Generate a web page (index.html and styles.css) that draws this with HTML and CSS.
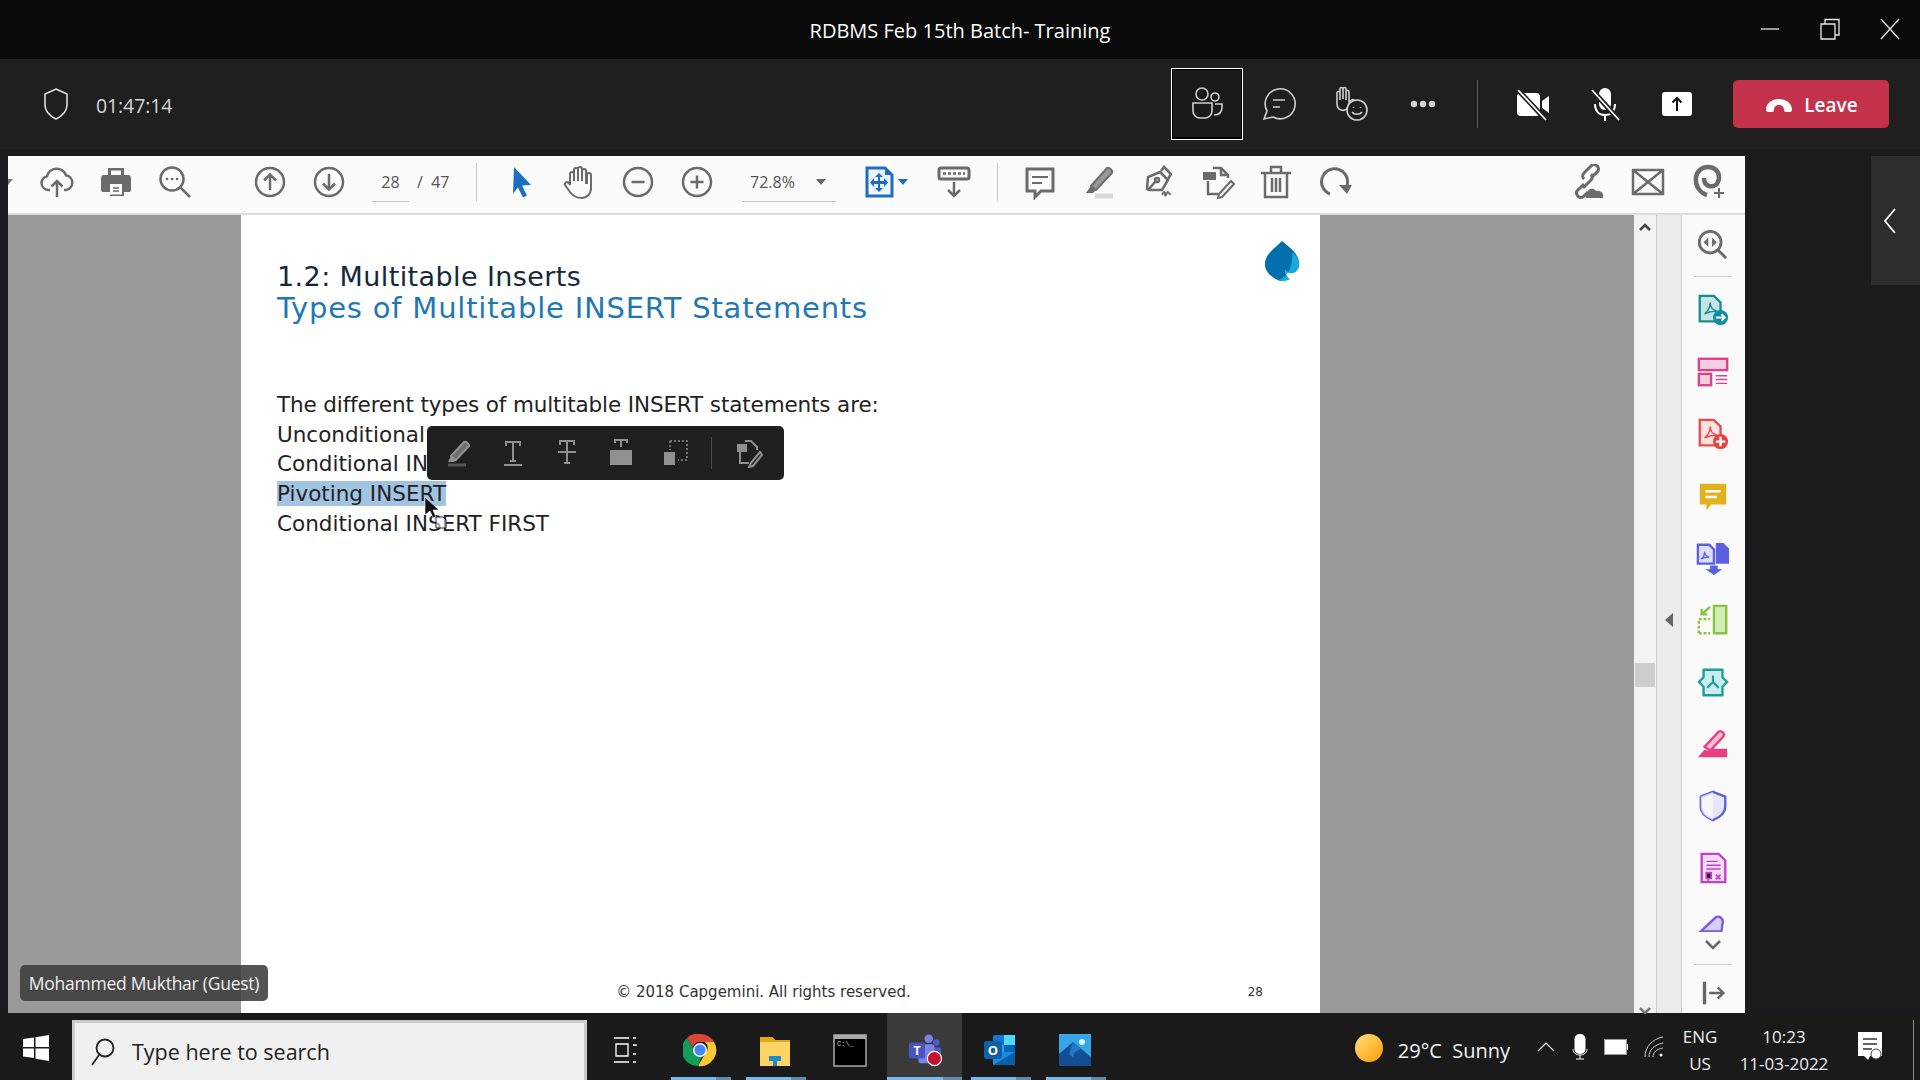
FILE: index.html
```html
<!DOCTYPE html>
<html lang="en">
<head>
<meta charset="utf-8">
<title>RDBMS Feb 15th Batch- Training</title>
<link rel="stylesheet" href="styles.css">
</head>
<body>
<div class="app">
  <header class="titlebar">
    <span></span>
    <h1 class="title">RDBMS Feb 15th Batch- Training</h1>
    <div class="winctl">
      <svg class="wc" viewBox="0 0 24 24"><path d="M3 12h18"/></svg>
      <svg class="wc" viewBox="0 0 24 24"><path d="M3 7h14v15H3z"/><path d="M7 7V2.500h14V18h-4"/></svg>
      <svg class="wc" viewBox="0 0 24 24"><path d="M3 2l18 20M21 2L3 22"/></svg>
    </div>
  </header>

  <section class="meetbar">
    <svg class="shield" viewBox="0 0 28 34"><path d="M14 2l11 5v11c0 7-5 11-11 14C8 29 3 25 3 18V7z"/></svg>
    <span class="timer">01:47:14</span>
    <div class="mtools">
      <button class="mbtn mbtn-active"><svg class="mi" viewBox="0 0 40 40"><circle cx="15" cy="10" r="6"/><circle cx="28" cy="13" r="4"/><path d="M6 19h19v8a7 7 0 0 1-7 7h-5a7 7 0 0 1-7-7z"/><path d="M28 20h7v3c0 5-3 8-8 8"/></svg></button>
      <button class="mbtn"><svg class="mi" viewBox="0 0 40 40"><path d="M5 35l3-8A15 15 0 1 1 14 33z"/><path d="M14 16h12M14 23h7"/></svg></button>
      <button class="mbtn"><svg class="mi" viewBox="0 0 40 40"><path d="M6 20V9a1.500 1.500 0 0 1 3 0v7V5a1.500 1.500 0 0 1 3 0v10V5a1.500 1.500 0 0 1 3 0v11V8a1.500 1.500 0 0 1 3 0v10c2-2 4-3 5-2l-6 8c-2 2-4 3-7 2-3-1-4-3-4-6z"/><circle class="mi-cover" cx="26" cy="26" r="10"/><path d="M21 28c2 3 8 3 10 0M22.500 23v.8M29.500 23v.8"/></svg></button>
      <button class="mbtn"><svg class="mi-fill" viewBox="0 0 40 40"><circle cx="11" cy="20" r="3.200"/><circle cx="20" cy="20" r="3.200"/><circle cx="29" cy="20" r="3.200"/></svg></button>
      <span class="msep"></span>
      <button class="mbtn"><svg class="mw" viewBox="0 0 40 40"><rect x="4" y="9" width="23" height="23" rx="4" fill="#fff"/><path d="M29 17l7-5v17l-7-5z" fill="#fff"/><path d="M5 6l28 30" stroke="#1f1f1f" stroke-width="5"/><path d="M5 6l28 30" stroke="#fff" stroke-width="1.800"/></svg></button>
      <button class="mbtn"><svg class="mw" viewBox="0 0 40 40"><rect x="14" y="4" width="12" height="22" rx="6" fill="#fff"/><path d="M10 20c0 7 4 11 10 11s10-4 10-11M20 31v6" fill="none" stroke="#fff" stroke-width="2"/><path d="M7 6l27 30" stroke="#1f1f1f" stroke-width="5"/><path d="M7 6l27 30" stroke="#fff" stroke-width="1.800"/></svg></button>
      <button class="mbtn"><svg class="mw" viewBox="0 0 40 40"><rect x="5" y="8" width="30" height="24" rx="3" fill="#fff"/><path d="M20 27V14M15.500 18.500L20 14l4.500 4.500" fill="none" stroke="#111" stroke-width="2"/></svg></button>
      <button class="leave"><svg class="hang" viewBox="0 0 30 20"><path d="M2 15c0-7 6-11 13-11s13 4 13 11c0 1-1 2-2 2h-4c-1 0-2-1-2-2 0-3-2-5-5-5s-5 2-5 5c0 1-1 2-2 2H4c-1 0-2-1-2-2z" fill="#fff"/></svg><span>Leave</span></button>
    </div>
  </section>

  <main class="stage">
    <div class="acrobat">
      <nav class="tbar">
        <i class="edgecaret"></i>
        <div class="tgroup g-first">
          <svg class="ti" viewBox="0 0 36 36"><path d="M11 26H9a7 7 0 0 1-1-13.800 10 10 0 0 1 19-1A7.500 7.500 0 0 1 27 26h-2"/><path d="M18 33V17M12.500 22.500L18 17l5.500 5.500"/></svg>
          <svg class="ti" viewBox="0 0 36 36"><path class="solid" d="M10 4h16v7h4a3 3 0 0 1 3 3v12a2 2 0 0 1-2 2h-5v4H12v-4H5a2 2 0 0 1-2-2V14a3 3 0 0 1 3-3h4z"/><path class="paper" d="M13 6.500h10V11H13zM12 20h12v10.500H12z"/><path d="M15 24h6M15 27h6" stroke-width="1.500"/></svg>
          <svg class="ti" viewBox="0 0 36 36"><circle cx="15" cy="15" r="11.500"/><path d="M23.500 23.500L33 33"/><path class="dots" d="M10 15h.1M15 15h.1M20 15h.1"/></svg>
        </div>
        <div class="tgroup g-nav">
          <svg class="ti" viewBox="0 0 36 36"><circle cx="18" cy="18" r="14"/><path d="M18 26V11M12 16.500L18 10.500l6 6"/></svg>
          <svg class="ti" viewBox="0 0 36 36"><circle cx="18" cy="18" r="14"/><path d="M18 10v15M12 19.500l6 6 6-6"/></svg>
        </div>
        <div class="pager"><span class="pagein">28</span><span class="pagetotal">/&nbsp;&nbsp;47</span></div>
        <span class="tsep"></span>
        <div class="tgroup g-tools">
          <svg class="ti" viewBox="0 0 36 36"><path d="M12 3l17 18-9 .5 5 10-4 2-5-10-5 6z" class="blue"/></svg>
          <svg class="ti" viewBox="0 0 36 36"><path d="M9 21V10a2 2 0 0 1 4 0v7V6a2 2 0 0 1 4 0v11V5a2 2 0 0 1 4 0v12V7a2 2 0 0 1 4 0v12h1V11a2 2 0 0 1 4 0v13c0 6-4 10-9.500 10S12 32 9 28l-5-7c-1-2 2-4 4-2z" stroke-width="2"/></svg>
          <svg class="ti" viewBox="0 0 36 36"><circle cx="18" cy="18" r="14"/><path d="M11.500 18h13"/></svg>
          <svg class="ti" viewBox="0 0 36 36"><circle cx="18" cy="18" r="14"/><path d="M11.500 18h13M18 11.500v13"/></svg>
        </div>
        <div class="zoombox"><span>72.8%</span><i class="caret"></i></div>
        <div class="fitbox">
          <svg class="ti" viewBox="0 0 36 36"><path class="bluefill" d="M6 4h18l7 7v21H6z"/><path class="bluemark" d="M24 4v7h7zM18 9l4 4h-3v4h4v-3l4 4.500-4 4.500v-3h-4v4h3l-4 4-4-4h3v-4h-4v3l-4-4.500 4-4.500v3h4v-4h-3z"/></svg>
          <i class="caret caret-blue"></i>
        </div>
        <svg class="ti ti-read" viewBox="0 0 36 36"><rect class="thick" x="3" y="4" width="30" height="11" rx="2"/><path class="readdots" d="M7 9.500h22"/><path d="M18 18v14M12 26l6 6 6-6"/></svg>
        <span class="tsep tsep-b"></span>
        <div class="tgroup g-comment">
          <svg class="ti" viewBox="0 0 36 36"><path class="thick" d="M5 5h26v22H19l-6 6v-6H5z"/><path d="M10 13h16M10 19h10" stroke-width="2"/></svg>
          <svg class="ti" viewBox="0 0 36 36"><path class="tint" d="M10 22L26 4c2-1 6 2 5 5L15 26z"/><path class="solid" d="M10 22l5 4-3 3H5z"/><path d="M14 32h18" stroke="#d9d9d9" stroke-width="5"/></svg>
          <svg class="ti" viewBox="0 0 36 36"><path d="M20 8l8 8-6 10H9l-2-1 1-12z"/><path d="M21 7l3-4 7 7-3 5M8 26l8-9"/><circle cx="17" cy="16" r="2"/><path d="M22 31c2-4 3-4 3-1s1 2 2-1 2 2 4 1" stroke-width="1.800"/></svg>
          <svg class="ti" viewBox="0 0 36 36"><path d="M14 4h8l7 7v3M9 17v13h10"/><path d="M22 4v7h7"/><rect class="solid" x="4" y="8" width="13" height="8"/><path d="M20 30l12-13 3 3-12 13-4 1z" stroke-width="2"/></svg>
          <svg class="ti" viewBox="0 0 36 36"><path d="M3 9h30M13 8V3h10v5M7 9v24h22V9M14 14v14M18 14v14M22 14v14"/></svg>
          <svg class="ti" viewBox="0 0 36 36"><path class="thick" d="M13 30A13 13 0 1 1 29 24"/><path class="solid" d="M22 21h13l-5 9z"/></svg>
        </div>
        <div class="tgroup g-share">
          <svg class="ti" viewBox="0 0 36 36"><path class="thick" d="M14 20l-7 7a4.500 4.500 0 0 0 6 6l5-5M21 14l7-7a4.500 4.500 0 0 0-6-6l-8 8a4 4 0 0 0 0 6M21 10a4 4 0 0 1 0 6l-8 8"/><path class="solid" d="M17 34c-2 0-2-3 0-4 0-5 6-7 9-3 3-1 7 1 7 4v3z"/></svg>
          <svg class="ti" viewBox="0 0 36 36"><path d="M3 6h30v24H3zM3 6l30 24M33 6L3 30"/></svg>
          <svg class="ti" viewBox="0 0 36 36"><path class="heavy" d="M17 31C10 29 5 22 6 13c1-6 6-10 12-10s11 4 11 10c0 3 0 4-2 7-2 2-4 3-8 2-3-1-5-4-5-8"/><path d="M29 24v10M24 29h10" stroke-width="2"/></svg>
        </div>
      </nav>

      <div class="doc">
        <div class="gutter gutter-l"></div>
        <article class="page">
          <div class="slidehead">
            <div class="heads">
              <h2 class="h-main">1.2: Multitable Inserts</h2>
              <h3 class="h-sub">Types of Multitable INSERT Statements</h3>
            </div>
            <svg class="logo" viewBox="0 0 40 46"><path d="M20 1C28 8 38 14 38 25c0 7-6 11-11 9-2-1-3-2-4-3 0 4 2 8 5 10-6 3-12 2-16-1-5-3-10-8-10-15C2 15 12 9 20 1z" fill="#0070ad"/><path d="M31 13c4 3 7 7 7 12 0 7-6 11-11 9-2-1-3-2-4-3 0 4 2 8 5 10-5 3-9 2-12 1 8-3 15-9 15-29z" fill="#12abdb"/></svg>
          </div>
          <ul class="lines">
            <li class="lead">The different types of multitable INSERT statements are:</li>
            <li>Unconditional INSERT ALL</li>
            <li>Conditional INSERT ALL</li>
            <li><mark class="sel">Pivoting INSERT</mark></li>
            <li>Conditional INSERT FIRST</li>
          </ul>
          <footer class="slidefoot"><span class="copy">© 2018 Capgemini. All rights reserved.</span><span class="pno">28</span></footer>

          <div class="popup">
            <svg class="pi" viewBox="0 0 30 30"><path class="pt" d="M7 18L20 4c2-1 5 2 5 4L12 22z"/><path class="pf" d="M7 18l5 4-2 2H4z"/><path d="M4 27h18" stroke="#555" stroke-width="3"/></svg>
            <svg class="pi" viewBox="0 0 30 30"><path d="M8 8V4h14v4M15 4v19M12 23h6M6 27h18"/></svg>
            <svg class="pi" viewBox="0 0 30 30"><path d="M8 7V3h14v4M15 3v22M12 25h6M6 14h18"/></svg>
            <svg class="pi" viewBox="0 0 30 30"><path d="M9 5V2h12v3M15 2v7"/><path class="pf" d="M4 12h22v15H4z"/></svg>
            <svg class="pi" viewBox="0 0 30 30"><path class="pf" d="M4 14h11v13H4z"/><path d="M10 3h17v19H18" stroke-dasharray="2 2" stroke-width="1.500"/><path d="M10 3v9" stroke-dasharray="2 2" stroke-width="1.500"/></svg>
            <span class="psep"></span>
            <svg class="pi" viewBox="0 0 30 30"><path d="M12 3h6l6 6v3M7 14v11h9"/><rect class="pf" x="4" y="6" width="10" height="8"/><path d="M18 25l9-11 2 3-9 11-4 1z"/></svg>
          </div>
          <svg class="cursor" viewBox="0 0 30 36"><path d="M1 1v18l5-4 3 7 3-1-3-7h6z" fill="#111" stroke="#fff" stroke-width=".6"/><path d="M12 21h7l3 3v8h-10z" fill="#fff" fill-opacity=".6" stroke="#222"/></svg>
        </article>
        <div class="gutter gutter-r"></div>
        <div class="scroll">
          <svg class="sarrow" viewBox="0 0 14 10"><path d="M2 8l5-5 5 5"/></svg>
          <span class="thumb"></span>
          <svg class="sarrow sarrow-b" viewBox="0 0 14 10"><path d="M2 2l5 5 5-5"/></svg>
        </div>
        <div class="strip"><i class="stripcaret"></i></div>
        <aside class="tools">
          <svg class="si si-first" viewBox="0 0 36 36"><circle cx="15" cy="15" r="11.500" fill="none" stroke="#6b6b6b" stroke-width="3"/><path d="M23.500 23.500L32 32" stroke="#6b6b6b" stroke-width="3"/><path d="M13 10v10l-5-5zM17 10v10l5-5z" fill="#6b6b6b"/></svg>
          <span class="ssep"></span>
          <svg class="si" viewBox="0 0 36 36"><path d="M4 3h15l7 7v20H4z" fill="#c5e4e6" stroke="#1a8a94" stroke-width="2.500"/><path d="M9 22c4-2 6-8 6-12 0 5 3 8 7 9-5 0-9 1-13 3z" fill="none" stroke="#1a8a94" stroke-width="1.500"/><circle cx="26" cy="26" r="8" fill="#0e8ea5"/><path d="M21 26h9M27 22.500l3.500 3.500-3.500 3.500" fill="none" stroke="#fff" stroke-width="2"/></svg>
          <svg class="si" viewBox="0 0 36 36"><rect x="3" y="4" width="30" height="12" fill="#f8cfe0" stroke="#e0408a" stroke-width="2.500"/><rect x="3" y="20" width="13" height="12" fill="#f8cfe0" stroke="#e0408a" stroke-width="2.500"/><path d="M21 22h12M21 26h12M21 30h12" stroke="#e0408a" stroke-width="1.500"/></svg>
          <svg class="si" viewBox="0 0 36 36"><path d="M4 3h15l7 7v20H4z" fill="#fde0e0" stroke="#e04f4f" stroke-width="2.500"/><path d="M9 22c4-2 6-8 6-12 0 5 3 8 7 9-5 0-9 1-13 3z" fill="none" stroke="#e04f4f" stroke-width="1.500"/><circle cx="26" cy="26" r="8" fill="#e8413f"/><path d="M21 26h10M26 21v10" stroke="#fff" stroke-width="2.500"/></svg>
          <svg class="si" viewBox="0 0 36 36"><path d="M5 5h26a1 1 0 0 1 1 1v20a1 1 0 0 1-1 1H16l-5 6v-6H5a1 1 0 0 1-1-1V6a1 1 0 0 1 1-1z" fill="#e3b11d"/><path d="M10 13h16M10 19h12" stroke="#fff" stroke-width="2.500"/></svg>
          <svg class="si" viewBox="0 0 36 36"><path d="M2 4h12l5 5v15H2z" fill="#dcdffb" stroke="#5b5fe0" stroke-width="2.500"/><path d="M5 19c3-1 4-5 4-8 0 3 2 5 5 6-3 0-6 0-9 2z" fill="none" stroke="#5b5fe0" stroke-width="1.300"/><path d="M21 2h8l6 6v16H21z" fill="#5b5fe0"/><path d="M15 26h8v4h5l-9 6-9-6h5z" fill="#5b5fe0"/></svg>
          <svg class="si" viewBox="0 0 36 36"><path d="M19 3h13v29H19z" fill="#d3edb8" stroke="#86c43c" stroke-width="2.500"/><path d="M3 32V17h12M3 32h12" fill="none" stroke="#86c43c" stroke-width="2.500" stroke-dasharray="3 2"/><path d="M15 4L6 12M6 6v6h6" fill="none" stroke="#86c43c" stroke-width="2.500"/></svg>
          <svg class="si" viewBox="0 0 36 36"><path d="M8 5h20v8l5 5-5 5v9H8v-9l-5-5 5-5z" fill="#c9ecec" stroke="#1a9d9d" stroke-width="2.500" stroke-linejoin="round"/><path d="M18 18v-7M18 18l-6 6M18 18l6 6" stroke="#1a9d9d" stroke-width="2.200"/></svg>
          <svg class="si" viewBox="0 0 36 36"><path d="M9 21L24 5c3-2 7 2 5 5L15 25z" fill="#f6bfd2" stroke="#e8407f" stroke-width="2.500"/><path d="M2 32l7-8 6 2 3-3h15v9z" fill="#e8407f"/></svg>
          <svg class="si" viewBox="0 0 36 36"><path d="M18 3l13 5v11c0 7-6 11-13 14C11 30 5 26 5 19V8z" fill="#e5e6fb" stroke="#5b5fe0" stroke-width="2.500"/><path d="M18 3v30C11 30 5 26 5 19V8z" fill="#fff" opacity=".6"/></svg>
          <svg class="si" viewBox="0 0 36 36"><path d="M6 3h18l7 7v23H6z" fill="#f6def6" stroke="#c23fc8" stroke-width="2.500"/><path d="M11 11h12M11 15h15M11 19h15" stroke="#c23fc8" stroke-width="1.500"/><path d="M11 23h5v6h-5zM13 29v3" stroke="#c23fc8" stroke-width="2"/><path d="M21 25l5 5M26 25l-5 5" stroke="#c23fc8" stroke-width="1.800"/></svg>
          <div class="toolsfade">
            <svg class="si si-cut" viewBox="0 0 36 20"><path d="M5 20l16-15c3-2 9 1 7 7l-1 8z" fill="#d9cdfa" stroke="#7c5be0" stroke-width="2.500"/></svg>
            <svg class="schev" viewBox="0 0 20 12"><path d="M3 2l7 7 7-7"/></svg>
          </div>
          <span class="ssep ssep-b"></span>
          <svg class="si si-collapse" viewBox="0 0 36 36"><path d="M9 6v24" stroke="#666" stroke-width="3.500"/><path d="M14 18h15M23 12l6 6-6 6" fill="none" stroke="#666" stroke-width="2.500"/></svg>
        </aside>
        <div class="nametag">Mohammed Mukthar (Guest)</div>
      </div>
    </div>
    <div class="sidehandle"><svg class="hchev" viewBox="0 0 14 28"><path d="M12 2L2 14l10 12"/></svg></div>
  </main>

  <footer class="taskbar">
    <div class="startbtn"><svg class="win" viewBox="0 0 26 26"><path d="M0 4l11-1.500V12H0zM12.500 2.300L26 0v12H12.500zM0 13.500h11V23L0 21.500zM12.500 13.500H26V26l-13.500-2.200z" fill="#fff"/></svg></div>
    <div class="searchbox">
      <svg class="searchicon" viewBox="0 0 26 30"><circle cx="15" cy="11" r="8.500"/><path d="M9 18L2 28"/></svg>
      <span>Type here to search</span>
    </div>
    <div class="task">
      <svg class="tk-view" viewBox="0 0 24 28"><path d="M1 2h15M1 26h15M3 8h12v12H3zM20 2h3M20 9h3v1M20 18h3M20 26h3" fill="none" stroke="#fff" stroke-width="1.300"/></svg>
    </div>
    <div class="task task-on">
      <svg class="tk" viewBox="0 0 34 34"><path d="M17 1a16 16 0 0 1 14 8H17a8 8 0 0 0-7.500 5L4 5a16 16 0 0 1 13-4z" fill="#db4437"/><path d="M4 5l7 12a7 7 0 0 0 8 6l-4 10A16 16 0 0 1 4 5z" fill="#0f9d58"/><path d="M31 9a16 16 0 0 1-16 24l7-12a8 8 0 0 0 0-12z" fill="#fcc934"/><circle cx="17" cy="17" r="7" fill="#fff"/><circle cx="17" cy="17" r="5.500" fill="#4285f4"/></svg>
    </div>
    <div class="task task-on">
      <svg class="tk" viewBox="0 0 34 34"><path d="M2 4h12l3 3h15v26H2z" fill="#fcd462"/><path d="M2 4h12l3 3H2z" fill="#e8a317"/><path d="M2 9h30V7H2z" fill="#e8a317"/><path d="M11 23h12v5h-4v5h-4v-5h-4z" fill="#1f8ad2"/></svg>
    </div>
    <div class="task">
      <svg class="tk" viewBox="0 0 34 34"><rect x="1" y="2" width="32" height="31" fill="#000" stroke="#aaa" stroke-width="1.500"/><rect x="1" y="2" width="32" height="4" fill="#aaa"/><text x="4" y="13" class="cmdtext">C:\_</text></svg>
    </div>
    <div class="task task-on task-active">
      <svg class="tk" viewBox="0 0 36 36"><circle cx="22" cy="6" r="4.500" fill="#7b83eb"/><circle cx="30" cy="10" r="3.500" fill="#5059c9"/><rect x="24" y="15" width="11" height="14" rx="2" fill="#5059c9"/><rect x="11" y="12" width="17" height="20" rx="3" fill="#7b83eb"/><rect x="1" y="10" width="17" height="17" rx="2" fill="#4b53bc"/><text x="9.500" y="23" class="tktext">T</text><circle cx="28" cy="27" r="7.500" fill="#c4122f" stroke="#fff" stroke-width="1.200"/></svg>
    </div>
    <div class="task task-on">
      <svg class="tk" viewBox="0 0 34 34"><rect x="10" y="2" width="22" height="30" rx="2" fill="#0f78d4"/><path d="M21 2h11v10H21z" fill="#50d9ff"/><path d="M10 12h11v10H10z" fill="#28a8ea"/><path d="M21 12h11v10H21z" fill="#0364b8"/><path d="M10 19l22 0v13H10z" fill="#1490df"/><path d="M10 32l22-13v13z" fill="#0a5da8"/><rect x="1" y="8" width="18" height="18" rx="2" fill="#0f5ea8"/><text x="10" y="22" class="tktext">O</text></svg>
    </div>
    <div class="task task-on">
      <svg class="tk" viewBox="0 0 34 34"><rect x="1" y="1" width="32" height="32" fill="#35a7e8"/><path d="M1 33V21l14-12 18 15v9z" fill="#134f93"/><path d="M15 9l8 7-6 3-2 5-4-3z" fill="#2178c4"/><circle cx="24" cy="9" r="3" fill="#dff3ff"/></svg>
    </div>

    <div class="tray">
      <svg class="sun" viewBox="0 0 28 30"><defs><linearGradient id="sung" x1="0" y1="0" x2="1" y2="1"><stop offset="0" stop-color="#fbe27e"/><stop offset="1" stop-color="#ff9a00"/></linearGradient></defs><ellipse cx="14" cy="15" rx="14" ry="14" fill="url(#sung)"/></svg>
      <span class="weather">29°C&nbsp; Sunny</span>
      <svg class="ty ty-chev" viewBox="0 0 20 20"><path d="M2 14l8-8 8 8" fill="none" stroke="#fff" stroke-width="1.200"/></svg>
      <svg class="ty ty-mic" viewBox="0 0 16 26"><rect x="2.500" y="0" width="11" height="20" rx="5" fill="#fff"/><path d="M1 15c0 4 3 6 7 6s7-2 7-6M8 21v4M4 25h8" fill="none" stroke="#fff" stroke-width="1"/></svg>
      <svg class="ty ty-bat" viewBox="0 0 24 18"><rect x="1" y="2" width="21" height="14" fill="#fff" stroke="#fff"/><rect x="22" y="6" width="2" height="6" fill="#fff"/><rect x=".5" y="1.500" width="22" height="15" fill="none" stroke="#999"/></svg>
      <svg class="ty ty-wifi" viewBox="0 0 20 22"><path d="M1 21C1 11 8 3 19 1M5 21c0-7 5-12 14-14M9 21c0-4 3-8 10-9" fill="none" stroke="#ccc" stroke-width="1"/><circle cx="17" cy="19" r="1.500" fill="#fff"/></svg>
      <div class="lang"><span>ENG</span><span>US</span></div>
      <div class="clock"><span>10:23</span><span>11-03-2022</span></div>
      <svg class="notif" viewBox="0 0 28 32"><path d="M2 1h24v24H14l-2 4-4-4H2z" fill="#fff"/><path d="M7 8h14M7 13h14M7 18h9" stroke="#333" stroke-width="1.400"/><circle cx="20" cy="23" r="5" fill="#fff" stroke="#444"/></svg>
      <span class="showdesk"></span>
    </div>
  </footer>
</div>
</body>
</html>
```

FILE: styles.css
```css
* { box-sizing: border-box; }
html, body { margin: 0; padding: 0; background: #1b1b1d; }
.app { width: 1920px; height: 1080px; display: flex; flex-direction: column; overflow: hidden; font-family: "Open Sans", "Noto Sans", sans-serif; color: #fff; }

/* title bar */
.titlebar { height: 58px; background: #0a0a0a; display: grid; grid-template-columns: 1fr auto 1fr; align-items: center; flex: none; padding-top: 2px; }
.title { margin: 0; font-size: 20px; font-weight: 400; color: #fff; }
.winctl { display: flex; justify-content: flex-end; gap: 36px; padding-right: 18px; padding-bottom: 2px; }
.wc { width: 24px; height: 24px; fill: none; stroke: #e8e8e8; stroke-width: 1.300; }

/* meeting bar */
.meetbar { height: 91px; flex: none; background: #1f1f1f; border-top: 1px solid #000; display: flex; align-items: center; padding-left: 42px; padding-right: 31px; }
.shield { width: 28px; height: 34px; fill: none; stroke: #e6e6e6; stroke-width: 1.500; flex: none; }
.timer { font-size: 19.500px; color: #d6d6d6; margin-left: 26px; padding-top: 2px; letter-spacing: -.1px; }
.mtools { margin-left: auto; display: flex; align-items: center; }
.mbtn { width: 72px; height: 72px; background: none; border: 0; padding: 0; display: flex; align-items: center; justify-content: center; flex: none; }
.mbtn-active { border: 1px solid #fff; background: #1a1a1a; box-shadow: inset 0 -2px 0 #000, inset 0 0 0 1px #000; }
.mi { width: 40px; height: 40px; fill: none; stroke: #cfcfcf; stroke-width: 1.600; }
.mi .mi-cover { fill: #1f1f1f; }
.mi-fill { width: 40px; height: 40px; fill: #d2d2d2; }
.mw { width: 40px; height: 40px; }
.msep { width: 1px; height: 48px; background: #5a5a5a; margin: 0 19px 0 18px; flex: none; }
.leave { width: 156px; height: 48px; margin-left: 20px; background: #c4314b; border: 0; border-radius: 5px; color: #fff; display: flex; align-items: center; justify-content: center; gap: 10px; font: 600 19px "Open Sans", sans-serif; flex: none; padding-top: 2px; }
.hang { width: 30px; height: 20px; }

/* stage */
.stage { flex: 1; display: flex; padding-top: 7px; background: #1b1b1d; min-height: 0; }
.acrobat { margin-left: 8px; width: 1737px; display: flex; flex-direction: column; background: #fafafa; color: #333; }
.sidehandle { margin-left: 126px; width: 49px; height: 129px; background: #2d2d2d; display: flex; align-items: center; justify-content: center; padding-right: 12px; }
.hchev { width: 14px; height: 28px; fill: none; stroke: #fff; stroke-width: 1.800; }

/* acrobat toolbar */
.tbar { height: 59px; flex: none; background: #fbfbfb; border-bottom: 2px solid #dcdcdc; display: flex; align-items: center; position: relative; color: #666; padding-bottom: 5px; }
.edgecaret { width: 5px; height: 6px; background: #777; clip-path: polygon(0 0, 100% 0, 0 100%); flex: none; }
.tgroup { display: flex; gap: 23px; align-items: center; }
.g-first { margin-left: 26px; }
.g-nav { margin-left: 59px; }
.ti { width: 36px; height: 36px; fill: none; stroke: #6b6b6b; stroke-width: 2.500; flex: none; }
.ti .solid { fill: #6b6b6b; stroke: none; }
.ti .paper { fill: #fbfbfb; stroke: none; }
.ti .blue { fill: #1b6ec2; stroke: none; }
.ti .thick { stroke-width: 3; }
.ti .heavy { stroke-width: 4.500; }
.ti .tint { fill: #9a9a9a; stroke-width: 2; }
.ti .dots { stroke-width: 2.600; stroke-linecap: round; }
.ti .readdots { stroke-width: 2.500; stroke-dasharray: 3 2; }
.ti .bluefill { fill: #eef5fc; stroke: #1b6ec2; stroke-width: 3; }
.ti .bluemark { fill: #1b6ec2; stroke: none; }
.pager { margin-left: 25px; width: 104px; height: 40px; display: flex; align-items: center; font: 16px "Open Sans", sans-serif; color: #555; position: relative; }
.pagein { width: 37px; text-align: center; height: 40px; line-height: 40px; border-bottom: 1px solid #c8c8c8; }
.pagetotal { margin-left: 8px; }
.tsep { width: 1px; height: 38px; background: #c8c8c8; flex: none; }
.g-tools { margin-left: 25px; }
.zoombox { margin-left: 27px; width: 94px; height: 40px; border-bottom: 1px solid #c8c8c8; display: flex; align-items: center; justify-content: space-between; padding: 0 10px 0 8px; font: 16px "Open Sans", sans-serif; color: #555; flex: none; }
.caret { width: 0; height: 0; border-left: 5px solid transparent; border-right: 5px solid transparent; border-top: 6px solid #666; display: block; flex: none; }
.caret-blue { border-top-color: #1b6ec2; }
.fitbox { margin-left: 25px; display: flex; align-items: center; gap: 1px; flex: none; }
.ti-read { margin-left: 28px; }
.tsep-b { margin-left: 25px; }
.g-comment { margin-left: 24px; gap: 23px; }
.g-share { margin-left: auto; margin-right: 19px; gap: 24px; }

/* document */
.doc { flex: 1; display: flex; min-height: 0; position: relative; }
.gutter { background: #9a9a9a; flex: none; }
.gutter-l { width: 233px; }
.gutter-r { width: 314px; }
.page { width: 1079px; flex: none; background: #fff; display: flex; flex-direction: column; position: relative; padding: 0 57px 0 36px; color: #222; font-family: "DejaVu Sans", Verdana, sans-serif; overflow: hidden; }
.slidehead { display: flex; justify-content: space-between; align-items: flex-start; padding-top: 46px; }
.h-main { margin: 0; font-size: 27px; line-height: 31px; font-weight: 400; color: #16283c; letter-spacing: .4px; }
.h-sub { margin: 0; font-size: 29px; line-height: 32px; font-weight: 400; color: #1f78b4; letter-spacing: .8px; }
.logo { width: 38px; height: 46px; margin-top: -22px; margin-right: -38px; flex: none; }
.lines { list-style: none; margin: 66px 0 0; padding: 0; font-size: 21.500px; line-height: 29.700px; color: #222; }
.lead { letter-spacing: -.13px; }
.sel { background: #a0c4e2; color: #222; }
.slidefoot { margin-top: auto; padding-bottom: 11px; display: flex; justify-content: flex-end; font-size: 15px; color: #333; }
.copy { margin-right: 337px; }
.pno { font-size: 12px; line-height: 19px; }
.popup { position: absolute; left: 186px; top: 211px; width: 357px; height: 54px; background: #1f1f1f; border-radius: 5px; display: flex; align-items: center; padding-left: 17px; gap: 24px; }
.pi { width: 30px; height: 30px; flex: none; fill: none; stroke: #909090; stroke-width: 2; }
.pi .pf { fill: #909090; stroke: none; }
.pi .pt { fill: #6e6e6e; }
.psep { width: 1px; height: 32px; background: #4a4a4a; margin: 0 -3px; flex: none; }
.cursor { position: absolute; left: 183px; top: 281px; width: 30px; height: 36px; }

/* scrollbar + strip */
.scroll { width: 23px; flex: none; background: #f3f3f3; border-right: 1px solid #c9c9c9; display: flex; flex-direction: column; align-items: center; position: relative; }
.sarrow { width: 14px; height: 10px; margin-top: 7px; fill: none; stroke: #444; stroke-width: 2.500; flex: none; }
.sarrow-b { margin-top: 0; position: absolute; bottom: -3px; left: 4px; stroke: #777; }
.thumb { width: 20px; height: 24px; background: #cdcdcd; margin-top: 431px; flex: none; }
.strip { width: 25px; flex: none; background: #ebebeb; border-right: 1px solid #cfcfcf; display: flex; align-items: center; justify-content: center; }
.stripcaret { width: 0; height: 0; border-top: 7px solid transparent; border-bottom: 7px solid transparent; border-right: 8px solid #666; display: block; margin-top: 12px; }

/* tool panel */
.tools { width: 63px; flex: none; background: #fafafa; display: flex; flex-direction: column; align-items: center; padding: 12px 2px 0 0; }
.si { width: 34px; height: 36px; flex: none; margin-bottom: 26px; display: block; }
.si-first { margin-bottom: 13px; }
.ssep { width: 38px; height: 1px; background: #d4d4d4; flex: none; margin-bottom: 15px; }
.ssep-b { margin-bottom: 10px; }
.toolsfade { display: flex; flex-direction: column; align-items: center; height: 52px; flex: none; }
.si-cut { height: 20px; margin-bottom: 7px; }
.schev { width: 20px; height: 12px; fill: none; stroke: #666; stroke-width: 2.500; flex: none; }
.si-collapse { margin: 0; }

.nametag { position: absolute; left: 12px; bottom: 12px; width: 248px; height: 36px; background: rgba(60,60,60,.88); border-radius: 5px; color: #f0f0f0; font: 17.500px/36px "Open Sans", sans-serif; text-align: center; letter-spacing: -.25px; white-space: nowrap; }

/* taskbar */
.taskbar { height: 67px; flex: none; background: #1a1a1a; display: flex; align-items: stretch; }
.startbtn { width: 72px; display: flex; align-items: center; justify-content: center; flex: none; padding-top: 2px; }
.win { width: 26px; height: 26px; }
.searchbox { width: 515px; height: 60px; align-self: flex-end; background: #f0f0f0; border: 3px solid #cacaca; border-bottom: 0; display: flex; align-items: center; padding-left: 15px; gap: 16px; color: #222; font-size: 21.500px; flex: none; }
.searchicon { width: 26px; height: 30px; fill: none; stroke: #222; stroke-width: 1.800; flex: none; }
.task { width: 75px; display: flex; align-items: center; justify-content: center; position: relative; flex: none; padding-top: 7px; }
.task-on::after { content: ""; position: absolute; left: 9px; bottom: 0; width: 60px; height: 3px; background: linear-gradient(90deg, #76b9ed 0 75%, #5f8db0 75%); }
.task-active { background: #3a3a3a; }
.task-active::after { left: 0; width: 75px; }
.tk { width: 34px; height: 34px; }
.tk-view { width: 24px; height: 28px; }
.cmdtext { font: 7px "Liberation Mono", monospace; fill: #ccc; }
.tktext { font: 700 13px "Open Sans", sans-serif; fill: #fff; text-anchor: middle; }

.tray { margin-left: auto; display: flex; align-items: center; gap: 16px; padding-right: 6px; flex: none; }
.sun { width: 28px; height: 30px; flex: none; margin-top: 3px; margin-right: 1px; }
.weather { font-size: 20px; color: #f2f2f2; margin-left: -2px; white-space: nowrap; margin-right: 10px; padding-top: 7px; }
.ty { flex: none; }
.ty-chev { width: 20px; height: 20px; }
.ty-mic { width: 16px; height: 26px; }
.ty-bat { width: 24px; height: 18px; }
.ty-wifi { width: 20px; height: 22px; }
.lang, .clock { display: flex; flex-direction: column; align-items: center; gap: 7px; font-size: 17px; line-height: 20px; color: #eee; flex: none; padding-top: 8px; }
.lang { width: 40px; }
.clock { width: 96px; }
.notif { width: 28px; height: 32px; margin-left: 8px; flex: none; }
.showdesk { width: 1px; height: 60px; background: #8a8a8a; margin-left: 13px; align-self: flex-end; flex: none; }
```
